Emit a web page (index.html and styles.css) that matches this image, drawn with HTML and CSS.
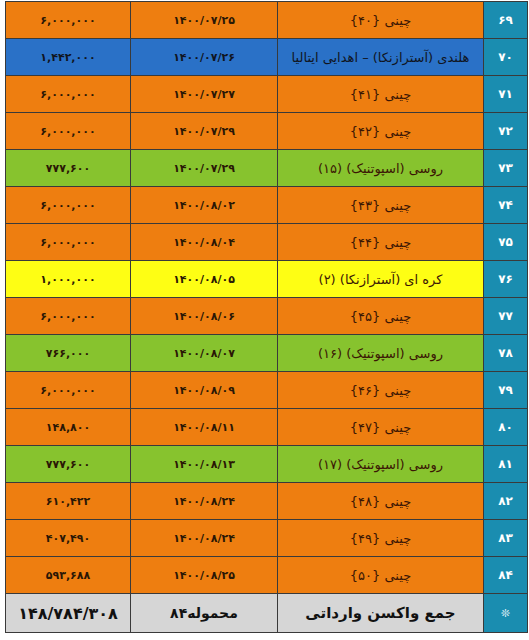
FILE: index.html
```html
<!DOCTYPE html>
<html lang="fa">
<head>
<meta charset="utf-8">
<link rel="stylesheet" href="styles.css">
</head>
<body>
<table class="grid">
  <colgroup>
    <col class="c-amount"><col class="c-date"><col class="c-name"><col class="c-num">
  </colgroup>
  <tbody>
    <tr class="orange"><td class="amt">۶,۰۰۰,۰۰۰</td><td class="date">۱۴۰۰/۰۷/۲۵</td><td class="name">چینی {۴۰}</td><td class="num">۶۹</td></tr>
    <tr class="blue"><td class="amt">۱,۴۴۲,۰۰۰</td><td class="date">۱۴۰۰/۰۷/۲۶</td><td class="name">هلندی (آسترازنکا) – اهدایی ایتالیا</td><td class="num">۷۰</td></tr>
    <tr class="orange"><td class="amt">۶,۰۰۰,۰۰۰</td><td class="date">۱۴۰۰/۰۷/۲۷</td><td class="name">چینی {۴۱}</td><td class="num">۷۱</td></tr>
    <tr class="orange"><td class="amt">۶,۰۰۰,۰۰۰</td><td class="date">۱۴۰۰/۰۷/۲۹</td><td class="name">چینی {۴۲}</td><td class="num">۷۲</td></tr>
    <tr class="green"><td class="amt">۷۷۷,۶۰۰</td><td class="date">۱۴۰۰/۰۷/۲۹</td><td class="name">روسی (اسپوتنیک) (۱۵)</td><td class="num">۷۳</td></tr>
    <tr class="orange"><td class="amt">۶,۰۰۰,۰۰۰</td><td class="date">۱۴۰۰/۰۸/۰۲</td><td class="name">چینی {۴۳}</td><td class="num">۷۴</td></tr>
    <tr class="orange"><td class="amt">۶,۰۰۰,۰۰۰</td><td class="date">۱۴۰۰/۰۸/۰۴</td><td class="name">چینی {۴۴}</td><td class="num">۷۵</td></tr>
    <tr class="yellow"><td class="amt">۱,۰۰۰,۰۰۰</td><td class="date">۱۴۰۰/۰۸/۰۵</td><td class="name">کره ای (آسترازنکا) (۲)</td><td class="num">۷۶</td></tr>
    <tr class="orange"><td class="amt">۶,۰۰۰,۰۰۰</td><td class="date">۱۴۰۰/۰۸/۰۶</td><td class="name">چینی {۴۵}</td><td class="num">۷۷</td></tr>
    <tr class="green"><td class="amt">۷۶۶,۰۰۰</td><td class="date">۱۴۰۰/۰۸/۰۷</td><td class="name">روسی (اسپوتنیک) (۱۶)</td><td class="num">۷۸</td></tr>
    <tr class="orange"><td class="amt">۶,۰۰۰,۰۰۰</td><td class="date">۱۴۰۰/۰۸/۰۹</td><td class="name">چینی {۴۶}</td><td class="num">۷۹</td></tr>
    <tr class="orange"><td class="amt">۱۴۸,۸۰۰</td><td class="date">۱۴۰۰/۰۸/۱۱</td><td class="name">چینی {۴۷}</td><td class="num">۸۰</td></tr>
    <tr class="green"><td class="amt">۷۷۷,۶۰۰</td><td class="date">۱۴۰۰/۰۸/۱۳</td><td class="name">روسی (اسپوتنیک) (۱۷)</td><td class="num">۸۱</td></tr>
    <tr class="orange"><td class="amt">۶۱۰,۴۲۲</td><td class="date">۱۴۰۰/۰۸/۲۴</td><td class="name">چینی {۴۸}</td><td class="num">۸۲</td></tr>
    <tr class="orange"><td class="amt">۴۰۷,۴۹۰</td><td class="date">۱۴۰۰/۰۸/۲۴</td><td class="name">چینی {۴۹}</td><td class="num">۸۳</td></tr>
    <tr class="orange"><td class="amt">۵۹۳,۶۸۸</td><td class="date">۱۴۰۰/۰۸/۲۵</td><td class="name">چینی {۵۰}</td><td class="num">۸۴</td></tr>
    <tr class="total"><td class="amt">۱۴۸/۷۸۴/۳۰۸</td><td class="date rtl">محموله۸۴</td><td class="name">جمع واکسن وارداتی</td><td class="num star">❊</td></tr>
  </tbody>
</table>
</body>
</html>
```

FILE: styles.css
```css
html, body {
  margin: 0;
  padding: 0;
  background: #ffffff;
}

body {
  padding: 1px 0 0 5px;
  font-family: "DejaVu Sans", sans-serif;
}

.grid {
  border-collapse: collapse;
  table-layout: fixed;
  width: 522px;
}

.c-amount { width: 125px; }
.c-date { width: 147px; }
.c-name { width: 206px; }
.c-num { width: 44px; }

.grid td {
  border: 1px solid #3a3a3a;
  height: 36px;
  padding: 0;
  text-align: center;
  vertical-align: middle;
  white-space: nowrap;
  overflow: hidden;
}

.amt, .date {
  font-size: 11px;
  font-weight: bold;
  color: #2a1705;
}

.name, .rtl {
  direction: rtl;
}

.name {
  font-size: 13px;
  color: #3b1604;
}

.num {
  background: #1a8db0;
  color: #ffffff;
  font-size: 12px;
  font-weight: bold;
}

.orange td:not(.num) {
  background: #ee7e10;
}
.orange .amt {
  background: linear-gradient(to right, #e06a06 0%, #ef7f12 35%, #ef8014 100%);
}

.blue td:not(.num) {
  background: #2a71c7;
  color: #10151f;
}
.blue .amt {
  background: linear-gradient(to right, #1f62b8 0%, #2b72c8 35%);
}

.green td:not(.num) {
  background: #87c32e;
}
.green .amt {
  background: linear-gradient(to right, #7cb826 0%, #88c42f 35%);
}

.yellow td:not(.num) {
  background: #fefe14;
}

.total td {
  height: 38px;
}
.total td:not(.num) {
  background: #d6d6d6;
  color: #111111;
  font-weight: bold;
}
.total .amt {
  font-size: 16px;
}
.total .date {
  font-size: 14px;
}
.total .name {
  font-size: 15px;
}

.star {
  font-size: 11px;
  color: #e8f6fb;
}
```
